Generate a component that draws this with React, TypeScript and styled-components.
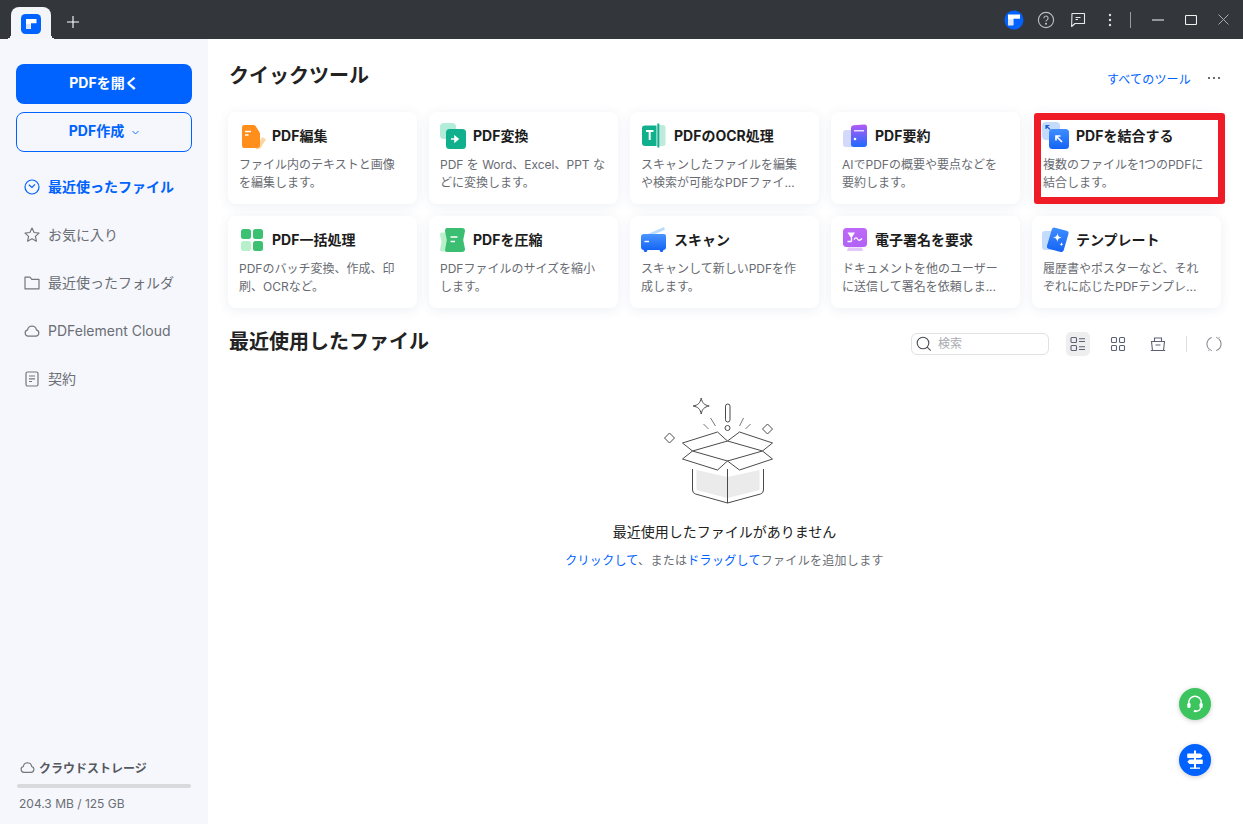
import React from "react";
import styled, { createGlobalStyle } from "styled-components";

const GlobalStyle = createGlobalStyle`
  html, body {
    margin: 0;
    padding: 0;
    background: #fff;
    font-family: Inter, "Noto Sans CJK JP", sans-serif;
    overflow: hidden;
  }
  * { box-sizing: border-box; }
`;

/* ---------- small drawings ---------- */

const Logo = () => (
  <svg width="20" height="20" viewBox="0 0 20 20">
    <rect width="20" height="20" rx="4.5" fill="#0062ff" />
    <path d="M5 5h10.500v4.300H10v5.700H5z" fill="#fff" />
    <rect x="5" y="9.800" width="4.500" height="5.200" fill="#d6e4ff" />
  </svg>
);

const AccountLogo = () => (
  <svg width="20" height="20" viewBox="0 0 20 20">
    <circle cx="10" cy="10" r="9.500" fill="#0062ff" />
    <path d="M4 4.500h12v4.300H9.500v6.500H4z" fill="#fff" />
    <rect x="4" y="9.300" width="5" height="6" fill="#d6e4ff" />
  </svg>
);

const HelpIcon = () => (
  <svg width="18" height="18" viewBox="0 0 18 18" fill="none" stroke="#bdbfc1" strokeWidth="1.100">
    <circle cx="9" cy="9" r="7.600" />
    <path d="M6.900 7.200a2.100 2.100 0 1 1 3.300 1.700c-.8.500-1.200.9-1.200 1.700" />
    <circle cx="9" cy="12.700" r=".5" fill="#bdbfc1" />
  </svg>
);

const CommentIcon = () => (
  <svg width="16" height="16" viewBox="0 0 16 16" fill="none" stroke="#e8e8e8" strokeWidth="1.100">
    <path d="M2 1.500h12.500v10H5L1.600 14.500z" strokeLinejoin="round" />
    <path d="M5.500 5.500h5M5.500 7.500h2.500" />
  </svg>
);

const DotsV = () => (
  <svg width="4" height="14" viewBox="0 0 4 14" fill="#e0e0e0">
    <circle cx="2" cy="2" r="1.200" />
    <circle cx="2" cy="7" r="1.200" />
    <circle cx="2" cy="12" r="1.200" />
  </svg>
);

const ClockIcon = () => (
  <svg width="16" height="16" viewBox="0 0 16 16" fill="none" stroke="#0062ff" strokeWidth="1.200">
    <circle cx="8" cy="8" r="7" />
    <path d="M4.800 5.800L8 8.400l3-3.100" />
  </svg>
);

const StarIcon = () => (
  <svg width="16" height="16" viewBox="0 0 16 16" fill="none" stroke="#73767b" strokeWidth="1.200" strokeLinejoin="round">
    <path d="M8 1l2.100 4.500 4.900.6-3.600 3.300 1 4.800L8 11.800l-4.400 2.400 1-4.800L1 6.100l4.900-.6z" />
  </svg>
);

const FolderIcon = () => (
  <svg width="16" height="16" viewBox="0 0 16 16" fill="none" stroke="#73767b" strokeWidth="1.200" strokeLinejoin="round">
    <path d="M1 2.200h5l1.800 2.100H15v9.500H1z" />
  </svg>
);

const CloudIcon = ({ size = 16 }: { size?: number }) => (
  <svg width={size} height={size} viewBox="0 0 16 16" fill="none" stroke="#73767b" strokeWidth="1.200" strokeLinejoin="round">
    <path d="M4.200 13.200a3.200 3.200 0 0 1-.6-6.300A4.600 4.600 0 0 1 8 3a4.600 4.600 0 0 1 4.400 3.900 3.200 3.200 0 0 1-.6 6.300z" />
  </svg>
);

const DocIcon = () => (
  <svg width="16" height="16" viewBox="0 0 16 16" fill="none" stroke="#73767b" strokeWidth="1.200" strokeLinejoin="round">
    <rect x="2" y="1" width="12" height="14" rx="1.500" />
    <path d="M5 5h6M5 7.800h6M5 10.500h3" />
  </svg>
);

const SearchIcon = () => (
  <svg width="16" height="16" viewBox="0 0 16 16" fill="none" stroke="#4a4d55" strokeWidth="1.100">
    <circle cx="7" cy="7" r="5.800" />
    <path d="M11.200 11.200l3.500 3.500" />
  </svg>
);

const ListViewIcon = () => (
  <svg width="16" height="16" viewBox="0 0 16 16" fill="none" stroke="#5b6075" strokeWidth="1.100">
    <rect x="1" y="1.500" width="5.500" height="5" rx="1" />
    <rect x="1" y="9.500" width="5.500" height="5" rx="1" />
    <path d="M9 2.800h6M9 5.500h6M9 10.800h6M9 13.500h6" />
  </svg>
);

const GridViewIcon = () => (
  <svg width="16" height="16" viewBox="0 0 16 16" fill="none" stroke="#5b6075" strokeWidth="1.100">
    <rect x="1.500" y="1.500" width="5" height="5" rx="1" />
    <rect x="9.500" y="1.500" width="5" height="5" rx="1" />
    <rect x="1.500" y="9.500" width="5" height="5" rx="1" />
    <rect x="9.500" y="9.500" width="5" height="5" rx="1" />
  </svg>
);

const ShelfIcon = () => (
  <svg width="16" height="16" viewBox="0 0 16 16" fill="none" stroke="#5b6075" strokeWidth="1.100">
    <path d="M4.500 5.500V2h7v3.500M1 5.500h14M1.500 5.500l1 9M14.500 5.500l-1 9M.8 14.500h14.400M5.500 9h5" />
  </svg>
);

const RefreshIcon = () => (
  <svg width="16" height="16" viewBox="0 0 16 16" fill="none" stroke="#8b8e96" strokeWidth="1.100">
    <path d="M5.800 1.400A7 7 0 0 0 3.200 13.200" />
    <path d="M10.200 14.600A7 7 0 0 0 12.800 2.800" />
    <path d="M10 1l2.200 1.700 1.400-1.800M6 15l-2.200-1.700-1.400 1.800" strokeWidth=".9" />
  </svg>
);

const HeadsetIcon = () => (
  <svg width="20" height="20" viewBox="0 0 20 20" fill="none" stroke="#fff" strokeWidth="1.400">
    <path d="M3.800 10V8.500a6.200 6.200 0 0 1 12.400 0V10" />
    <rect x="2.300" y="8.800" width="3.200" height="5.200" rx="1.500" fill="#fff" stroke="none" />
    <rect x="14.500" y="8.800" width="3.200" height="5.200" rx="1.500" fill="#fff" stroke="none" />
    <path d="M15.500 14c-.3 2-2 3-4.300 3.200" />
    <ellipse cx="10.200" cy="17.200" rx="1.600" ry="1.100" fill="#fff" stroke="none" />
  </svg>
);

const SignpostIcon = () => (
  <svg width="20" height="20" viewBox="0 0 20 20" fill="#fff">
    <rect x="9" y="0.500" width="2" height="18" />
    <rect x="5" y="17.500" width="10" height="1.300" />
    <path d="M3 3.500h12.500l2.200 2.200-2.200 2.300H3a.8.800 0 0 1-.8-.8V4.300a.8.800 0 0 1 .8-.8z" />
    <path d="M17 9.600H4.500l-2.200 2.200 2.200 2.300H17a.8.800 0 0 0 .8-.8v-2.900a.8.800 0 0 0-.8-.8z" />
  </svg>
);

const EmptyBox = () => (
  <svg width="160" height="120" viewBox="4.500 0 160 120" fill="none" stroke="#4a4a4a" strokeWidth="1" strokeLinejoin="round">
    <path d="M56 80l31 7 32-7v20l-32 8-31-8z" fill="#ebebeb" stroke="none" />
    <path d="M60.700 8c1 5 3 7 8 8-5 1-7 3-8 8-1-5-3-7-8-8 5-1 7-3 8-8z" />
    <path d="M29 43l5 5-5 5-5-5zM127 34l5 5-5 5-5-5z" />
    <rect x="85" y="14" width="4.500" height="18" rx="2.200" />
    <circle cx="87" cy="38" r="2.500" />
    <path d="M70 28l5 8M63 34l5 5M103 28l-4 8M110 34l-5 5" stroke="#777" />
    <path d="M52 61l35-10 35 10-35 10z" />
    <path d="M87 51L77 42 42 53l10 8M87 51l12-9 33 11-10 8" />
    <path d="M52 61l-10 8 35 11 10-9 12 9 33-11-10-8" />
    <path d="M52 79v21q0 3 3 4l32 9 33-9q3-1 3-4V79M87 79v34" />
  </svg>
);

const EditTool = () => (
  <svg width="30" height="28" viewBox="0 0 30 28">
    <path d="M24.500 15L28 17.500 22 26.500 18 27.500 18.500 24z" fill="#fcd5a0" />
    <path d="M6 3h9.500q1.500 0 2.300 1.200l3.700 6q.5.800.5 1.800v11q0 3-3 3H6q-2 0-2-3V6q0-3 2-3z" fill="#ff8f1a" />
    <path d="M7 9.500h6M7 13h3.500" stroke="#fff" strokeWidth="1.600" />
  </svg>
);

const ConvertTool = () => (
  <svg width="30" height="28" viewBox="0 0 30 28">
    <rect x="1" y="1" width="16" height="16" rx="4" fill="#b3ecd8" />
    <rect x="7" y="7" width="20" height="20" rx="3.500" fill="#10b08d" />
    <path d="M12 17h6M16 14.500l3 2.500-3 2.500z" stroke="#fff" strokeWidth="1.600" fill="#fff" />
  </svg>
);

const OcrTool = () => (
  <svg width="30" height="28" viewBox="0 0 30 28">
    <path d="M19 3h4q2.500 0 2.500 2.500v16q0 2.500-2.500 2.500h-4z" fill="#bfeadc" />
    <path d="M5 3.500h11.500v20.500H5q-3 0-3-3V6q0-2.500 3-2.500z" fill="#10b08d" />
    <rect x="17.300" y="1.500" width="2" height="24" fill="#10b08d" />
    <path d="M6 9h7.500M9.700 9v9" stroke="#fff" strokeWidth="2" />
  </svg>
);

const SummaryTool = () => (
  <svg width="30" height="28" viewBox="0 0 30 28">
    <defs>
      <linearGradient id="sumg" x1="0" y1="0" x2="0" y2="1">
        <stop offset="0" stopColor="#b45af5" />
        <stop offset="1" stopColor="#1e6bff" />
      </linearGradient>
    </defs>
    <path d="M5 8h6v17H5q-3 0-3-3V11q0-3 3-3z" fill="#d3d9fb" />
    <path d="M10 6q0-2.500 2.500-2.800l11-.8q2.500 0 2.500 2.600V22q0 3-3 3H12.500Q10 25 10 22z" fill="url(#sumg)" />
    <path d="M13 8.800h10" stroke="#fff" strokeWidth="1.200" />
    <circle cx="14" cy="17" r="1.300" fill="#fff" />
  </svg>
);

const MergeTool = () => (
  <svg width="30" height="28" viewBox="0 0 30 28">
    <defs>
      <linearGradient id="mrgg" x1="0" y1="0" x2="0" y2="1">
        <stop offset="0" stopColor="#3f8dff" />
        <stop offset="1" stopColor="#1464f5" />
      </linearGradient>
    </defs>
    <rect x="0" y="0" width="18" height="18" rx="4" fill="#c3dcfb" />
    <path d="M4 3.500l4 4M4 7V3.500h3.500" stroke="#1d5fd6" strokeWidth="1.200" fill="none" />
    <rect x="7" y="7" width="20" height="20" rx="3.500" fill="url(#mrgg)" />
    <path d="M14 14l6 6M14 18.500V14h4.500" stroke="#fff" strokeWidth="1.700" fill="none" />
  </svg>
);

const BatchTool = () => (
  <svg width="30" height="28" viewBox="0 0 30 28">
    <rect x="3" y="3" width="10" height="10" rx="2.500" fill="#3cc072" />
    <rect x="15" y="3" width="10" height="10" rx="2.500" fill="#3cc072" />
    <rect x="3" y="15" width="10" height="10" rx="2.500" fill="#b8f0cc" />
    <rect x="15" y="15" width="10" height="10" rx="2.500" fill="#3cc072" />
  </svg>
);

const CompressTool = () => (
  <svg width="30" height="28" viewBox="0 0 30 28">
    <path d="M3 6.500h7v19H3q-2 0-2-2l1.500-7.500L1 8.500q0-2 2-2z" fill="#b8f0cc" />
    <path d="M8 2h15q3 0 3 3l-1.800 9L26 23q0 3-3 3H8q-2 0-2-2l1.800-10L6 5q0-3 2-3z" fill="#3bbd72" />
    <path d="M11.500 11h7M11.500 15.500h4.500" stroke="#fff" strokeWidth="1.500" />
  </svg>
);

const ScanTool = () => (
  <svg width="30" height="28" viewBox="0 0 30 28">
    <defs>
      <linearGradient id="scng" x1="0" y1="0" x2="0" y2="1">
        <stop offset="0" stopColor="#4a95ff" />
        <stop offset="1" stopColor="#1464f5" />
      </linearGradient>
    </defs>
    <path d="M1 11L24 1l1 2.800L4 12.500z" fill="#bcdcfb" />
    <path d="M4 8h20q2 0 2 2v11q0 3-3 3H4q-3 0-3-3V11q0-3 3-3z" fill="url(#scng)" />
    <path d="M3.500 24h4l-1 2h-2zM19.500 24h4l-1 2h-2z" fill="#1464f5" />
    <path d="M4.500 15.500h4.500" stroke="#fff" strokeWidth="1.400" />
  </svg>
);

const SignTool = () => (
  <svg width="30" height="28" viewBox="0 0 30 28">
    <defs>
      <linearGradient id="sigg" x1="0" y1="0" x2="0" y2="1">
        <stop offset="0" stopColor="#bd68f8" />
        <stop offset="1" stopColor="#b262f7" />
      </linearGradient>
    </defs>
    <rect x="2" y="2" width="24" height="19" rx="3.500" fill="url(#sigg)" />
    <path d="M7 21.500h14l1 3.500H6z" fill="#e3c6fa" />
    <path d="M6.500 6.500h7.500l-3.700 6z" fill="#fff" />
    <path d="M10.500 12v3.500M6.500 15.500h4M13 13.500c1.500-2 2.500-2 3.500-.5s2 2 4.500-.5" stroke="#fff" strokeWidth="1.300" fill="none" />
  </svg>
);

const TemplateTool = () => (
  <svg width="30" height="28" viewBox="0 0 30 28">
    <defs>
      <linearGradient id="tplg" x1="0" y1="0" x2="0" y2="1">
        <stop offset="0" stopColor="#3f8dff" />
        <stop offset="1" stopColor="#1464f5" />
      </linearGradient>
    </defs>
    <path d="M3 5h9v19H3q-3 0-3-3V8q0-3 3-3z" fill="#c3dcfb" />
    <path d="M13 1.700l11.500 3q2.500.7 2 3l-4.800 16.500q-.7 2.300-3 1.700L6.500 22.800q-2-.6-1.600-2.800L9.800 3.500q.7-2.400 3.200-1.800z" fill="url(#tplg)" />
    <path d="M15.500 7c.4 3 1.300 4 4.300 4.500-3 .5-4 1.500-4.500 4.500-.4-3-1.300-4-4.300-4.500 3-.5 4-1.500 4.500-4.500z" fill="#fff" />
    <path d="M19.500 16c.2 1.500.6 2 2 2.200-1.400.3-1.800.7-2 2.300-.2-1.600-.6-2-2-2.300 1.400-.2 1.800-.7 2-2.200z" fill="#fff" />
  </svg>
);

/* ---------- data ---------- */

const tools = [
  { icon: <EditTool />, name: "PDF編集", desc: "ファイル内のテキストと画像を編集します。" },
  { icon: <ConvertTool />, name: "PDF変換", desc: "PDF を Word、Excel、PPT などに変換します。" },
  { icon: <OcrTool />, name: "PDFのOCR処理", desc: "スキャンしたファイルを編集や検索が可能なPDFファイ..." },
  { icon: <SummaryTool />, name: "PDF要約", desc: "AIでPDFの概要や要点などを要約します。" },
  { icon: <MergeTool />, name: "PDFを結合する", desc: "複数のファイルを1つのPDFに結合します。", marked: true },
  { icon: <BatchTool />, name: "PDF一括処理", desc: "PDFのバッチ変換、作成、印刷、OCRなど。" },
  { icon: <CompressTool />, name: "PDFを圧縮", desc: "PDFファイルのサイズを縮小します。" },
  { icon: <ScanTool />, name: "スキャン", desc: "スキャンして新しいPDFを作成します。" },
  { icon: <SignTool />, name: "電子署名を要求", desc: "ドキュメントを他のユーザーに送信して署名を依頼しま..." },
  { icon: <TemplateTool />, name: "テンプレート", desc: "履歴書やポスターなど、それぞれに応じたPDFテンプレ..." },
];

const navItems = [
  { icon: <ClockIcon />, label: "最近使ったファイル", active: true },
  { icon: <StarIcon />, label: "お気に入り" },
  { icon: <FolderIcon />, label: "最近使ったフォルダ" },
  { icon: <CloudIcon />, label: "PDFelement Cloud" },
  { icon: <DocIcon />, label: "契約" },
];

const App = () => {
  return (
    <Page>
      <GlobalStyle />
      <TitleBar>
        <Tab>
          <Logo />
        </Tab>
        <NewTab>
          <svg width="12" height="12" viewBox="0 0 12 12" stroke="#fff" strokeWidth="1.100">
            <path d="M6 0v12M0 6h12" />
          </svg>
        </NewTab>
        <BarTools>
          <BarButton><AccountLogo /></BarButton>
          <BarButton><HelpIcon /></BarButton>
          <BarButton><CommentIcon /></BarButton>
          <BarButton><DotsV /></BarButton>
          <BarDivider />
          <WinButton>
            <svg width="12" height="2" viewBox="0 0 12 2" stroke="#e6e6e6" strokeWidth="1.100">
              <path d="M0 1h12" />
            </svg>
          </WinButton>
          <WinButton>
            <svg width="12" height="10" viewBox="0 0 12 10" fill="none" stroke="#f0f0f0" strokeWidth="1.100">
              <rect x=".5" y=".5" width="11" height="9" rx="1" />
            </svg>
          </WinButton>
          <WinButton>
            <svg width="11" height="11" viewBox="0 0 11 11" stroke="#a9abad" strokeWidth="1">
              <path d="M.5.500l10 10M10.500.500l-10 10" />
            </svg>
          </WinButton>
        </BarTools>
      </TitleBar>
      <Body>
        <Side>
          <OpenButton>PDFを開く</OpenButton>
          <CreateButton>
            PDF作成
            <svg width="7" height="5" viewBox="0 0 7 5" fill="none" stroke="#0062ff" strokeWidth=".9">
              <path d="M.5 1l3 3 3-3" />
            </svg>
          </CreateButton>
          <Nav>
            {navItems.map((item) => (
              <NavItem key={item.label} $active={item.active}>
                {item.icon}
                <span>{item.label}</span>
              </NavItem>
            ))}
          </Nav>
          <Storage>
            <StorageTitle>
              <CloudIcon size={15} />
              クラウドストレージ
            </StorageTitle>
            <StorageBar />
            <StorageText>204.3 MB / 125 GB</StorageText>
          </Storage>
        </Side>
        <Main>
          <QuickHeader>
            <Heading>クイックツール</Heading>
            <AllTools>
              <AllLink>すべてのツール</AllLink>
              <svg width="14" height="4" viewBox="0 0 14 4" fill="#4a4a4a">
                <circle cx="2" cy="2" r="1.100" />
                <circle cx="7" cy="2" r="1.100" />
                <circle cx="12" cy="2" r="1.100" />
              </svg>
            </AllTools>
          </QuickHeader>
          <ToolGrid>
            {tools.map((tool) => (
              <ToolCard key={tool.name}>
                <ToolTop>
                  {tool.icon}
                  <ToolName>{tool.name}</ToolName>
                </ToolTop>
                <ToolDesc>{tool.desc}</ToolDesc>
                {tool.marked && <RedMark />}
              </ToolCard>
            ))}
          </ToolGrid>
          <RecentHeader>
            <Heading>最近使用したファイル</Heading>
            <RecentTools>
              <SearchBox>
                <SearchIcon />
                <SearchHint>検索</SearchHint>
              </SearchBox>
              <ViewButton $active><ListViewIcon /></ViewButton>
              <ViewButton><GridViewIcon /></ViewButton>
              <ViewButton><ShelfIcon /></ViewButton>
              <ToolDivider />
              <ViewButton><RefreshIcon /></ViewButton>
            </RecentTools>
          </RecentHeader>
          <Empty>
            <EmptyBox />
            <EmptyTitle>最近使用したファイルがありません</EmptyTitle>
            <EmptyHint>
              <em>クリックして</em>、または<em>ドラッグして</em>ファイルを追加します
            </EmptyHint>
          </Empty>
        </Main>
      </Body>
      <FloatButton $bottom={104} $bg="#3cc45f"><HeadsetIcon /></FloatButton>
      <FloatButton $bottom={48} $bg="#0062ff"><SignpostIcon /></FloatButton>
    </Page>
  );
};

export default App;

const Page = styled.div`
  position: relative;
  width: 100vw;
  height: 100vh;
  display: flex;
  flex-direction: column;
  overflow: hidden;
`;
const TitleBar = styled.div`
  height: 39px;
  flex: none;
  display: flex;
  align-items: flex-end;
  background-color: #33373b;
  padding-left: 11px;
`;
const Tab = styled.div`
  position: relative;
  width: 40px;
  height: 32px;
  display: flex;
  justify-content: center;
  padding-top: 7px;
  background-color: #f3f5f9;
  border-radius: 8px 8px 0 0;

  &::before,
  &::after {
    content: "";
    position: absolute;
    bottom: 0;
    width: 5px;
    height: 5px;
    background: radial-gradient(circle at 100% 0, transparent 5px, #f3f5f9 5px);
  }
  &::before {
    left: -5px;
    transform: scaleX(-1);
  }
  &::after {
    right: -5px;
  }
`;
const NewTab = styled.div`
  height: 39px;
  display: flex;
  align-items: center;
  margin-left: 16px;
  padding-top: 5px;
`;
const BarTools = styled.div`
  margin-left: auto;
  height: 39px;
  display: flex;
  align-items: center;
  padding-right: 3px;
`;
const BarButton = styled.div`
  width: 32px;
  height: 32px;
  display: flex;
  align-items: center;
  justify-content: center;
`;
const BarDivider = styled.div`
  width: 1px;
  height: 16px;
  background-color: #9a9c9e;
  margin: 0 10px 0 4px;
`;
const WinButton = styled.div`
  width: 33px;
  height: 32px;
  display: flex;
  align-items: center;
  justify-content: center;
`;
const Body = styled.div`
  flex: 1;
  min-height: 0;
  display: flex;
`;
const Side = styled.div`
  width: 208px;
  flex: none;
  display: flex;
  flex-direction: column;
  padding: 25px 16px 0;
  background-color: #f5f7fc;
`;
const OpenButton = styled.div`
  height: 40px;
  display: flex;
  align-items: center;
  justify-content: center;
  padding-bottom: 4px;
  border-radius: 8px;
  background-color: #0062ff;
  color: #fff;
  font-size: 14px;
  font-weight: 700;
`;
const CreateButton = styled.div`
  height: 40px;
  margin-top: 8px;
  display: flex;
  align-items: center;
  justify-content: center;
  gap: 8px;
  padding-bottom: 4px;
  border: 1px solid #0062ff;
  border-radius: 8px;
  color: #0062ff;
  font-size: 14px;
  font-weight: 700;
  background: #f5f7fc;

  svg {
    margin-top: 5px;
  }
`;
const Nav = styled.div`
  margin-top: 11px;
  display: flex;
  flex-direction: column;
`;
const NavItem = styled.div<{ $active?: boolean }>`
  height: 48px;
  display: flex;
  align-items: center;
  gap: 8px;
  padding-left: 8px;
  font-size: 14px;
  font-weight: ${(p) => (p.$active ? 700 : 400)};
  color: ${(p) => (p.$active ? "#0062ff" : "#6b6e74")};
  white-space: nowrap;

  svg {
    flex: none;
  }
  span {
    margin-top: -2px;
  }
`;
const Storage = styled.div`
  margin-top: auto;
  padding: 0 1px 11px;
`;
const StorageTitle = styled.div`
  display: flex;
  align-items: center;
  gap: 4px;
  padding-left: 3px;
  font-size: 12px;
  font-weight: 700;
  color: #55585e;
`;
const StorageBar = styled.div`
  height: 4px;
  margin-top: 8px;
  border-radius: 2px;
  background-color: #d9dadd;
`;
const StorageText = styled.div`
  margin-top: 7px;
  padding-left: 2px;
  font-size: 12px;
  line-height: 18px;
  color: #6b6e74;
`;
const Main = styled.div`
  flex: 1;
  min-width: 0;
  display: flex;
  flex-direction: column;
  padding: 0 22px 0 20px;
  background-color: #fff;
`;
const QuickHeader = styled.div`
  height: 72px;
  margin-bottom: 1px;
  display: flex;
  align-items: center;
  justify-content: space-between;
  padding: 2px 0 0 1px;
`;
const Heading = styled.h2`
  margin: 0;
  font-size: 20px;
  line-height: 24px;
  font-weight: 700;
  color: #222;
`;
const AllTools = styled.div`
  display: flex;
  align-items: center;
  gap: 16px;
  padding-top: 4px;
`;
const AllLink = styled.span`
  font-size: 12px;
  letter-spacing: 0.2px;
  color: #0062ff;
`;
const ToolGrid = styled.div`
  display: grid;
  grid-template-columns: repeat(5, 189px);
  grid-auto-rows: 92px;
  gap: 12px;
`;
const ToolCard = styled.div`
  position: relative;
  padding: 10px 13px 0 11px;
  border-radius: 8px;
  background-color: #fff;
  box-shadow: 0 2px 12px rgba(60, 80, 130, 0.09);
`;
const ToolTop = styled.div`
  height: 28px;
  margin-left: -1px;
  display: flex;
  align-items: center;
  gap: 4px;

  svg {
    flex: none;
  }
`;
const ToolName = styled.div`
  margin-top: -2px;
  font-size: 14px;
  font-weight: 700;
  color: #1c1c1c;
  white-space: nowrap;
`;
const ToolDesc = styled.div`
  margin-top: 6px;
  font-size: 12px;
  line-height: 18px;
  color: #686b72;
`;
const RedMark = styled.div`
  position: absolute;
  top: 1px;
  left: 2px;
  right: -4px;
  bottom: 0;
  border: 7px solid #ef1c27;
  border-radius: 3px;
`;
const RecentHeader = styled.div`
  margin-top: 22px;
  display: flex;
  align-items: flex-start;
  justify-content: space-between;
  padding-left: 1px;
`;
const RecentTools = styled.div`
  display: flex;
  align-items: center;
  margin-top: 2px;
`;
const SearchBox = styled.div`
  width: 138px;
  height: 22px;
  display: flex;
  align-items: center;
  gap: 6px;
  padding-left: 4px;
  margin-right: 17px;
  border: 1px solid #dfe1e5;
  border-radius: 6px;
  font-size: 12px;
  color: #a9abb0;
`;
const SearchHint = styled.span`
  margin-top: -3px;
`;
const ViewButton = styled.div<{ $active?: boolean }>`
  width: 24px;
  height: 24px;
  display: flex;
  align-items: center;
  justify-content: center;
  margin-right: 16px;
  border-radius: 5px;
  background-color: ${(p) => (p.$active ? "#eeeeef" : "transparent")};

  &:last-child {
    margin-right: -5px;
  }
`;
const ToolDivider = styled.div`
  width: 1px;
  height: 16px;
  margin: 0 15px 0 0;
  background-color: #dfe0e3;
`;
const Empty = styled.div`
  margin-top: 34px;
  display: flex;
  flex-direction: column;
  align-items: center;
`;
const EmptyTitle = styled.div`
  margin-top: 12px;
  font-size: 14px;
  line-height: 20px;
  color: #222;
`;
const EmptyHint = styled.div`
  margin-top: 10px;
  font-size: 12px;
  line-height: 18px;
  color: #6b6e74;
  letter-spacing: 0.3px;

  em {
    font-style: normal;
    color: #0062ff;
  }
`;
const FloatButton = styled.div<{ $bottom: number; $bg: string }>`
  position: absolute;
  right: 32px;
  bottom: ${(p) => p.$bottom}px;
  width: 32px;
  height: 32px;
  display: flex;
  align-items: center;
  justify-content: center;
  border-radius: 50%;
  background-color: ${(p) => p.$bg};
  box-shadow: 0 1px 5px rgba(0, 0, 0, 0.2);
`;
